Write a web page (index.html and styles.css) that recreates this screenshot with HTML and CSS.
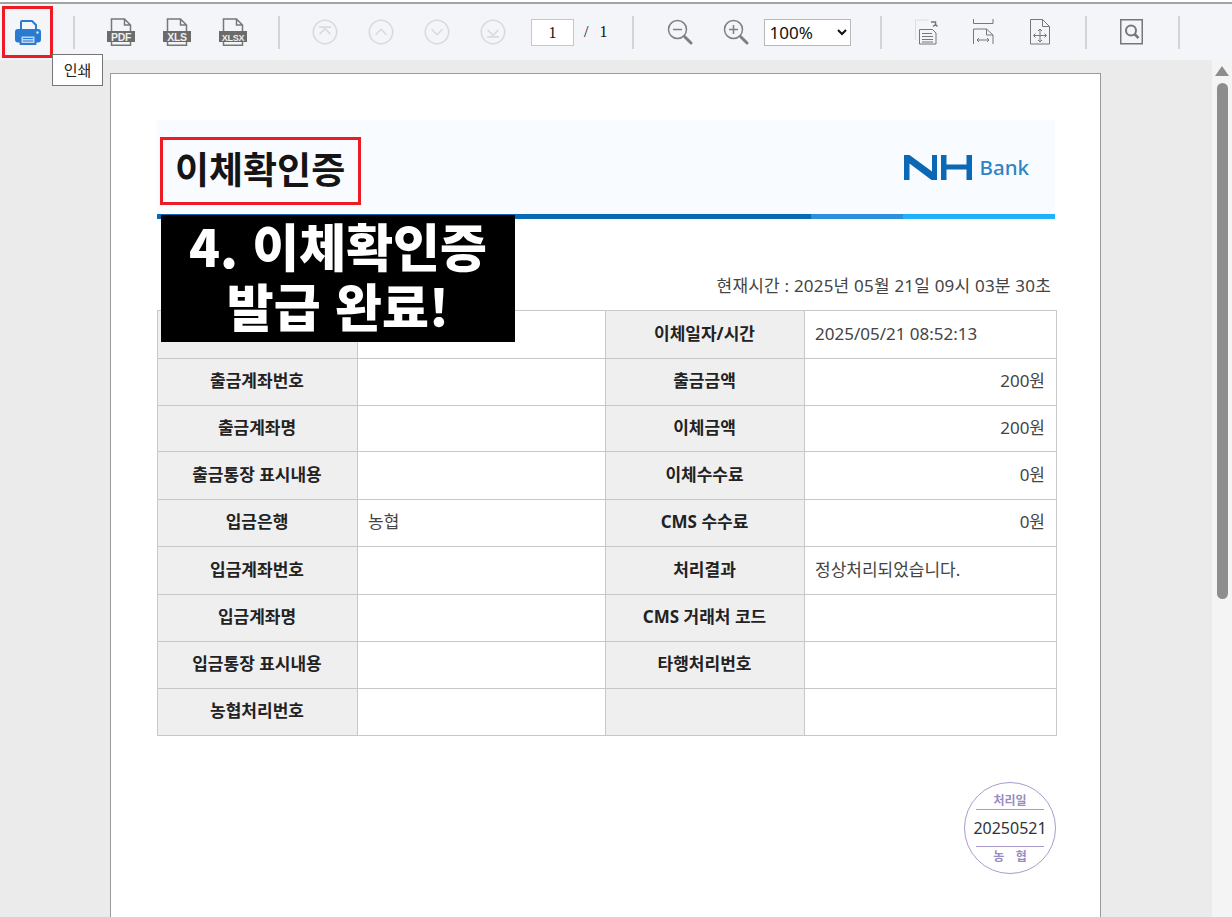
FILE: index.html
```html
<!DOCTYPE html>
<html lang="ko">
<head>
<meta charset="utf-8">
<title>이체확인증</title>
<link rel="stylesheet" href="styles.css">
</head>
<body>
<div class="app">
  <div class="toolbar">
    <button class="tb tb-print"><svg width="26" height="25" viewBox="0 0 26 25"><path d="M6 10V2a1 1 0 0 1 1-1h10l4 4v5" fill="#f3f7fc" stroke="#2a7bd0" stroke-width="2"/><rect x="0" y="9" width="26" height="13.500" rx="3" fill="#2a7bd0"/><rect x="4.500" y="14.500" width="17" height="10.500" rx="1" fill="#2a7bd0"/><rect x="6.500" y="16.500" width="13" height="6.500" fill="#bcd8f4"/><path d="M8 18.500h10M8 21h10" stroke="#2a7bd0" stroke-width="1"/><circle cx="22.500" cy="12.500" r="1.200" fill="#d5e6f8"/></svg></button>
    <span class="sep s1"></span>
    <button class="tb doc"><svg width="28" height="28" viewBox="0 0 28 28"><path d="M4.500 13V1h13l6 6v6M4.500 24v3.200h19V24M17.500 1v6h6" fill="none" stroke="#777" stroke-width="1.500"/><rect x="0" y="13" width="28" height="11" fill="#6b6b6b"/><text x="14" y="22.500" class="doc-t">PDF</text></svg></button>
    <button class="tb doc"><svg width="28" height="28" viewBox="0 0 28 28"><path d="M4.500 13V1h13l6 6v6M4.500 24v3.200h19V24M17.500 1v6h6" fill="none" stroke="#777" stroke-width="1.500"/><rect x="0" y="13" width="28" height="11" fill="#6b6b6b"/><text x="14" y="22.500" class="doc-t">XLS</text></svg></button>
    <button class="tb doc"><svg width="28" height="28" viewBox="0 0 28 28"><path d="M4.500 13V1h13l6 6v6M4.500 24v3.200h19V24M17.500 1v6h6" fill="none" stroke="#777" stroke-width="1.500"/><rect x="0" y="13" width="28" height="11" fill="#6b6b6b"/><text x="14" y="22.500" class="doc-t doc-t-sm">XLSX</text></svg></button>
    <span class="sep s2"></span>
    <button class="tb nav"><svg width="26" height="26" viewBox="0 0 24 24" class="dim"><circle cx="12" cy="12" r="10.800"/><path d="M6.500 7.500h11M7 14l5-5 5 5"/></svg></button>
    <button class="tb nav"><svg width="26" height="26" viewBox="0 0 24 24" class="dim"><circle cx="12" cy="12" r="10.800"/><path d="M7 14.500l5-5 5 5"/></svg></button>
    <button class="tb nav"><svg width="26" height="26" viewBox="0 0 24 24" class="dim"><circle cx="12" cy="12" r="10.800"/><path d="M7 9.500l5 5 5-5"/></svg></button>
    <button class="tb nav"><svg width="26" height="26" viewBox="0 0 24 24" class="dim"><circle cx="12" cy="12" r="10.800"/><path d="M7 10l5 5 5-5M6.500 16.500h11"/></svg></button>
    <span class="page-box">1</span>
    <span class="page-of">/</span>
    <span class="page-total">1</span>
    <span class="sep s3"></span>
    <button class="tb zoom zoom-out"><svg width="26" height="26" viewBox="0 0 26 26" class="line"><circle cx="10.500" cy="10.500" r="9"/><path d="M6 10.500h9"/><path class="thick" d="M17.500 17.500l6.500 6.500"/></svg></button>
    <button class="tb zoom zoom-in"><svg width="26" height="26" viewBox="0 0 26 26" class="line"><circle cx="10.500" cy="10.500" r="9"/><path d="M6 10.500h9M10.500 6v9"/><path class="thick" d="M17.500 17.500l6.500 6.500"/></svg></button>
    <select class="zoom-sel"><option>100%</option></select>
    <span class="sep s4"></span>
    <button class="tb fit f1"><svg width="26" height="26" viewBox="0 0 26 26" fill="none"><path d="M.5 20.500V1h13" stroke="#ddd" stroke-width="1"/><path d="M4.500 25V10.500h13l3.500 3.500V25z" fill="#f3f5f9" stroke="#777"/><path d="M7 14.500h10M7 17.500h11M7 20.500h11M7 23h11" stroke="#777"/><path d="M16 3h4.500v4M18 7.500l2.500-2 2 2" stroke="#777" stroke-width="1.500"/></svg></button>
    <button class="tb fit f2"><svg width="22" height="26" viewBox="0 0 22 26" fill="none" stroke="#777"><path d="M.5 0v4.500h19.500V0M.5 25V10h13l6.500 6v9"/><path d="M13.500 10v6h6.500"/><path d="M4 21h12M6 19l-2 2 2 2M14 19l2 2-2 2"/></svg></button>
    <button class="tb fit f3"><svg width="20" height="26" viewBox="0 0 20 26" fill="none" stroke="#777"><path d="M.5 25V.5h12l7 7V25z"/><path d="M12.500 .5v7h7"/><path d="M3.500 16.500h13M10 10v13M8 12l2-2 2 2M8 21l2 2 2-2M5.500 14.500l-2 2 2 2M14.500 14.500l2 2-2 2"/></svg></button>
    <span class="sep s5"></span>
    <button class="tb find"><svg width="24" height="26" viewBox="0 0 24 26" fill="none" stroke="#777"><rect x=".75" y=".75" width="21.500" height="24" stroke-width="1.500"/><circle cx="11" cy="11.500" r="5" stroke-width="2"/><path d="M14.500 15l4 4" stroke-width="2.500"/></svg></button>
    <span class="sep s6"></span>
  </div>
  <div class="viewer">
    <div class="gutter">
      <div class="sheet">
        <div class="band">
          <h1 class="doc-title">이체확인증</h1>
          <div class="logo"><svg width="68" height="26" viewBox="0 0 68 26" class="nh-svg"><path d="M0 26V1h5.500L28 17.500V1h5v25h-5.500L5.500 9.500V26z" fill="#0a68b4"/><path d="M37 1h5.500v9.500h20V1H68v25h-5.500V15.500h-20V26H37z" fill="#0a68b4"/></svg><span class="bank">Bank</span></div>
        </div>
        <div class="rule"><span class="r1"></span><span class="r2"></span><span class="r3"></span></div>
        <p class="stamp-time">현재시간 : 2025년 05월 21일 09시 03분 30초</p>
        <table class="info">
          <colgroup><col class="c1"><col class="c2"><col class="c3"><col class="c4"></colgroup>
          <tr class="h48"><th></th><td></td><th>이체일자/시간</th><td>2025/05/21 08:52:13</td></tr>
          <tr class="h47"><th>출금계좌번호</th><td></td><th>출금금액</th><td class="num">200원</td></tr>
          <tr class="h46"><th>출금계좌명</th><td></td><th>이체금액</th><td class="num">200원</td></tr>
          <tr class="h48"><th>출금통장 표시내용</th><td></td><th>이체수수료</th><td class="num">0원</td></tr>
          <tr class="h47"><th>입금은행</th><td>농협</td><th>CMS 수수료</th><td class="num">0원</td></tr>
          <tr class="h48"><th>입금계좌번호</th><td></td><th>처리결과</th><td>정상처리되었습니다.</td></tr>
          <tr class="h47"><th>입금계좌명</th><td></td><th>CMS 거래처 코드</th><td></td></tr>
          <tr class="h47"><th>입금통장 표시내용</th><td></td><th>타행처리번호</th><td></td></tr>
          <tr class="h47"><th>농협처리번호</th><td></td><th></th><td></td></tr>
        </table>
        <div class="seal-row">
          <div class="seal">
            <span class="seal-top">처리일</span>
            <span class="seal-date">20250521</span>
            <span class="seal-bot">농 협</span>
          </div>
        </div>
      </div>
    </div>
    <div class="scrollbar">
      <span class="arrow"></span>
      <span class="thumb"></span>
    </div>
  </div>
</div>
<div class="mark mark-print"></div>
<div class="mark mark-title"></div>
<div class="tooltip">인쇄</div>
<div class="caption">4. 이체확인증<br>발급 완료!</div>
</body>
</html>
```
FILE: styles.css
```css
* { box-sizing: border-box; }
html, body { margin: 0; height: 100%; overflow: hidden; }
body { background: #fff; font-family: "Noto Sans CJK KR", "Noto Sans", sans-serif; color: #222; }
.app { height: 917px; display: flex; flex-direction: column; padding-top: 2px; }
.toolbar { height: 58px; flex: none; background: #f3f5f9; border-top: 2px solid #a3a3a3; display: flex; align-items: center; position: relative; }
.tb { border: 0; background: none; padding: 0; margin: 0; display: flex; flex: none; line-height: 0; }
.tb-print { margin-left: 15px; }
.sep { flex: none; width: 2px; height: 33px; background: #d2d4d6; }
.s1 { margin-left: 32px; margin-right: 32px; }
.doc + .doc { margin-left: 28px; }
.s2 { margin-left: 31px; margin-right: 32px; }
.doc-t { font: 700 10.500px "Liberation Sans Narrow", "Liberation Sans", sans-serif; fill: #eee; text-anchor: middle; letter-spacing: -.3px; }
.doc-t-sm { font-size: 9px; }
.nav + .nav { margin-left: 30px; }
.dim { fill: none; stroke: #d9dadc; stroke-width: 1.500; }
.page-box { margin-left: 25px; width: 43px; height: 27px; background: #fff; border: 1px solid #c8c8c8; font: 16px/25px "Liberation Serif", serif; color: #111; text-align: center; flex: none; }
.page-of { margin-left: 10px; font: 16px "Liberation Serif", serif; color: #111; flex: none; }
.page-total { margin-left: 11px; font: 16px "Liberation Serif", serif; color: #111; flex: none; }
.s3 { margin-left: 25px; margin-right: 33px; }
.line { fill: none; stroke: #808080; stroke-width: 1.500; }
.thick { stroke-width: 3; stroke-linecap: round; }
.zoom-in { margin-left: 30px; }
.zoom-sel { margin-left: 15px; width: 87px; height: 27px; border: 1px solid #b8b8b8; background: #fff; font: 17px "Noto Sans", sans-serif; color: #111; padding: 0; border-radius: 0; }
.s4 { margin-left: 29px; margin-right: 33px; }
.f2 { margin-left: 32px; }
.f3 { margin-left: 35px; }
.s5 { margin-left: 35px; margin-right: 33px; }
.s6 { margin-left: 34px; }
.viewer { flex: 1; display: flex; background: #ebebeb; min-height: 0; overflow: hidden; }
.gutter { flex: 1; min-width: 0; padding: 13px 0 0 110px; }
.sheet { width: 991px; height: 900px; background: #fff; border: 1px solid #9a9a9a; padding: 46px 0 0 46px; }
.scrollbar { width: 20px; flex: none; background: #f4f4f4; display: flex; flex-direction: column; align-items: center; padding-top: 6px; }
.arrow { width: 0; height: 0; border-left: 7px solid transparent; border-right: 7px solid transparent; border-bottom: 10px solid #8d8d8d; }
.thumb { width: 11px; height: 516px; margin-top: 7px; background: #8d8d8d; border-radius: 6px; }
.band { width: 898px; height: 94px; background: #f8fbff; display: flex; justify-content: space-between; align-items: center; padding: 0 26px 0 18px; }
.doc-title { margin: 0; font-size: 37px; font-weight: 700; color: #151515; line-height: 44px; padding-top: 2px; }
.logo { display: flex; align-items: center; gap: 8px; }
.bank { font: 500 20.500px "Noto Sans", sans-serif; line-height: 26px; color: #2f83c6; }
.rule { display: flex; width: 898px; height: 5px; }
.r1 { width: 654px; background: #0869b5; }
.r2 { width: 92px; background: #2b90dd; }
.r3 { width: 152px; background: #1fb2fb; }
.stamp-time { width: 894px; margin: 0; padding-top: 56px; text-align: right; font-family: "Noto Sans", "Noto Sans CJK KR", sans-serif; font-size: 17px; letter-spacing: .2px; line-height: 21px; color: #444; height: 91px; white-space: nowrap; }
.info { border-collapse: collapse; table-layout: fixed; width: 899px; font-family: "Noto Sans", "Noto Sans CJK KR", sans-serif; font-size: 17px; line-height: 20px; color: #444; }
.info th, .info td { border: 1px solid #c8c8c8; padding: 0 11px 2px 10px; }
.info th { background: #efefef; font-weight: 700; text-align: center; color: #222; }
.c1 { width: 200px; } .c2 { width: 248px; } .c3 { width: 199px; } .c4 { width: 252px; }
.h46 { height: 46px; } .h47 { height: 47px; } .h48 { height: 48px; }
.num { text-align: right; }
.seal-row { width: 899px; display: flex; justify-content: flex-end; padding-top: 46px; }
.seal { width: 92px; height: 92px; border: 1.500px solid #a99ccc; border-radius: 50%; display: flex; flex-direction: column; align-items: center; justify-content: center; }
.seal-top { font-size: 12px; line-height: 18px; color: #9a8bc0; font-weight: 700; width: 68px; text-align: center; border-bottom: 1.500px solid #a99ccc; }
.seal-date { font: 16px/36px "Noto Sans", sans-serif; color: #333; }
.seal-bot { font-size: 12px; line-height: 18px; color: #9a8bc0; font-weight: 700; width: 68px; text-align: center; border-top: 1.500px solid #a99ccc; word-spacing: 8px; }
.mark { position: absolute; border: 3px solid #ed1c24; }
.mark-print { left: 2px; top: 6px; width: 51px; height: 52px; }
.mark-title { left: 160px; top: 137px; width: 201px; height: 68px; }
.tooltip { position: absolute; left: 52px; top: 54px; width: 51px; height: 32px; background: #fff; border: 1px solid #767676; font-size: 15px; line-height: 29px; text-align: center; color: #222; }
.caption { position: absolute; left: 161px; top: 215px; width: 354px; height: 127px; background: #000; color: #fff; font-size: 51px; font-weight: 900; line-height: 60px; text-align: center; white-space: nowrap; }
```
